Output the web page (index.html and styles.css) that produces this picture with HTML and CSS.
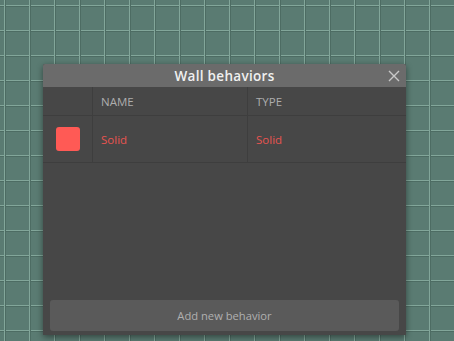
FILE: index.html
```html
<!DOCTYPE html>
<html>
<head>
<meta charset="utf-8">
<link rel="stylesheet" href="styles.css">
</head>
<body>
<div class="canvas">
  <div class="dialog">
    <div class="titlebar">
      <span class="title">Wall behaviors</span>
      <svg class="close" width="12" height="12" viewBox="0 0 12 12"><path d="M1 1L11 11M11 1L1 11" stroke="#c8c8c8" stroke-width="1.4" fill="none"/></svg>
    </div>
    <div class="content">
      <div class="table">
        <div class="row head">
          <div class="cell c1"></div>
          <div class="cell c2">NAME</div>
          <div class="cell c3">TYPE</div>
        </div>
        <div class="row item">
          <div class="cell c1"><span class="swatch"></span></div>
          <div class="cell c2 red">Solid</div>
          <div class="cell c3 red">Solid</div>
        </div>
      </div>
      <div class="spacer"></div>
      <div class="btn">Add new behavior</div>
    </div>
  </div>
</div>
</body>
</html>
```
FILE: styles.css
```css
html, body { margin: 0; padding: 0; }
body {
  width: 454px; height: 341px; overflow: hidden;
  font-family: "Open Sans", "Noto Sans", sans-serif;
  background-color: #5a7b72;
  background-image:
    linear-gradient(to right, #82a69a 0, #82a69a 1px, #4d6c63 1px, #4d6c63 2px, transparent 2px),
    linear-gradient(to bottom, #82a69a 0, #82a69a 1px, #4d6c63 1px, #4d6c63 2px, transparent 2px);
  background-size: 25px 25px;
  background-position: 4px 5px;
}
.canvas { position: relative; width: 454px; height: 341px; }
.dialog {
  position: absolute; left: 43px; top: 64px; width: 363px; height: 271px;
  background: #474747;
  display: flex; flex-direction: column;
  box-shadow: 0 2px 6px rgba(0,0,0,0.45);
  border-radius: 2px 2px 0 0;
}
.titlebar {
  height: 23px; background: #6b6b6b;
  display: flex; align-items: center; justify-content: center;
  position: relative; border-radius: 2px 2px 0 0;
}
.title { color: #f0f0f0; font-size: 13.5px; font-weight: 600; letter-spacing: 0.3px; }
.close { position: absolute; right: 6px; top: 6px; }
.content { flex: 1; display: flex; flex-direction: column; }
.table { display: flex; flex-direction: column; }
.row { display: flex; border-bottom: 1px solid #3e3e3e; }
.head { height: 28px; }
.item { height: 46px; }
.cell { display: flex; align-items: center; font-size: 11.5px; }
.c1 { width: 49px; border-right: 1px solid #3e3e3e; justify-content: center; }
.c2 { width: 146px; padding-left: 8px; border-right: 1px solid #3e3e3e; }
.c3 { flex: 1; padding-left: 8px; }
.head .cell { color: #adadad; }
.red { color: #e85450; }
.swatch { width: 24px; height: 24px; background: #ff5a55; border-radius: 3px; }
.spacer { flex: 1; }
.btn {
  margin: 0 7px 4px 7px; height: 31px; background: #5a5a5a; border-radius: 3px;
  color: #b0b0b0; font-size: 11.2px; display: flex; align-items: center; justify-content: center;
}
```
